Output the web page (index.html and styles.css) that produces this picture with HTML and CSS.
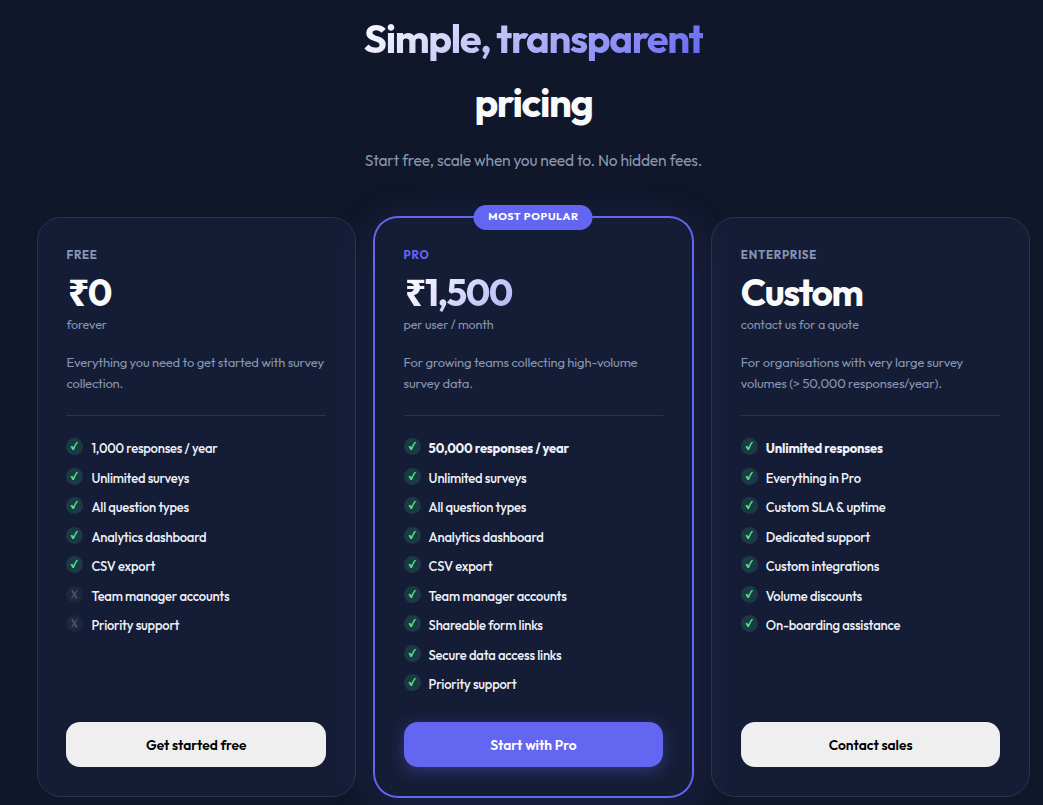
FILE: index.html
```html
<!DOCTYPE html>
<html lang="en">
<head>
  <meta charset="UTF-8">
  <title>Pricing</title>
  <meta name="viewport" content="width=device-width, initial-scale=1.0">
  <link rel="stylesheet" href="styles.css">
</head>
<body>
  <!-- icons shared by the feature lists -->
  <svg class="sprite" width="0" height="0">
    <symbol id="check" viewBox="0 0 17 17">
      <path d="M4.4 8.5 L6.2 7.7 L7.4 9.3 Q8.8 6 10.5 4 L12.2 3.9 Q9.6 7.4 8 11.9 L6.5 12 Z"/>
    </symbol>
    <symbol id="cross" viewBox="0 0 17 17">
      <path d="M4.9 4.3 L7.1 4.1 L8.7 6.9 L10.5 4.2 L12 4.2 L9.4 8.1 L11.8 12.3 L9.5 12.5 L8 9.7 L6.3 12.5 L4.8 12.5 L7.3 8.5 Z"/>
    </symbol>
  </svg>

  <section class="pricing">
    <h1><span class="grad">Simple, transparent</span><br>pricing</h1>
    <p class="sub">Start free, scale when you need to. No hidden fees.</p>

    <div class="plans">
      <div class="plan">
        <div class="plan-name">FREE</div>
        <div class="price"><span class="rupee">₹</span>0</div>
        <div class="period">forever</div>
        <p class="desc">Everything you need to get started with survey collection.</p>
        <ul>
          <li><svg class="yes"><use href="#check"/></svg>1,000 responses / year</li>
          <li><svg class="yes"><use href="#check"/></svg>Unlimited surveys</li>
          <li><svg class="yes"><use href="#check"/></svg>All question types</li>
          <li><svg class="yes"><use href="#check"/></svg>Analytics dashboard</li>
          <li><svg class="yes"><use href="#check"/></svg>CSV export</li>
          <li><svg class="no"><use href="#cross"/></svg>Team manager accounts</li>
          <li><svg class="no"><use href="#cross"/></svg>Priority support</li>
        </ul>
        <button>Get started free</button>
      </div>

      <div class="plan popular">
        <div class="badge">MOST POPULAR</div>
        <div class="plan-name">PRO</div>
        <div class="price grad"><span class="rupee">₹</span>1,500</div>
        <div class="period">per user / month</div>
        <p class="desc">For growing teams collecting high-volume survey data.</p>
        <ul>
          <li><svg class="yes"><use href="#check"/></svg><strong>50,000 responses / year</strong></li>
          <li><svg class="yes"><use href="#check"/></svg>Unlimited surveys</li>
          <li><svg class="yes"><use href="#check"/></svg>All question types</li>
          <li><svg class="yes"><use href="#check"/></svg>Analytics dashboard</li>
          <li><svg class="yes"><use href="#check"/></svg>CSV export</li>
          <li><svg class="yes"><use href="#check"/></svg>Team manager accounts</li>
          <li><svg class="yes"><use href="#check"/></svg>Shareable form links</li>
          <li><svg class="yes"><use href="#check"/></svg>Secure data access links</li>
          <li><svg class="yes"><use href="#check"/></svg>Priority support</li>
        </ul>
        <button class="primary">Start with Pro</button>
      </div>

      <div class="plan">
        <div class="plan-name">ENTERPRISE</div>
        <div class="price">Custom</div>
        <div class="period">contact us for a quote</div>
        <p class="desc">For organisations with very large survey volumes (&gt; 50,000 responses/year).</p>
        <ul>
          <li><svg class="yes"><use href="#check"/></svg><strong>Unlimited responses</strong></li>
          <li><svg class="yes"><use href="#check"/></svg>Everything in Pro</li>
          <li><svg class="yes"><use href="#check"/></svg>Custom SLA &amp; uptime</li>
          <li><svg class="yes"><use href="#check"/></svg>Dedicated support</li>
          <li><svg class="yes"><use href="#check"/></svg>Custom integrations</li>
          <li><svg class="yes"><use href="#check"/></svg>Volume discounts</li>
          <li><svg class="yes"><use href="#check"/></svg>On-boarding assistance</li>
        </ul>
        <button>Contact sales</button>
      </div>
    </div>
  </section>
</body>
</html>
```
FILE: styles.css
```css
* {
  box-sizing: border-box;
  margin: 0;
  padding: 0;
}

body {
  height: 805px;
  overflow: hidden;
  background: #10172a;
  color: #f8fafc;
  font-family: Outfit, Lato, "Noto Sans", sans-serif;
  letter-spacing: -0.16px;
}

.sprite {
  position: absolute;
}

.pricing {
  width: 993.7px;
  margin-left: 36.6px;
  padding-top: 7.3px;
}

h1 {
  text-align: center;
  font-size: 40px;
  font-weight: 700;
  line-height: 63.4px;
  letter-spacing: -1.4px;
}

.grad {
  background: linear-gradient(135deg, #fff 0%, #6366f1 100%);
  -webkit-background-clip: text;
  background-clip: text;
  color: transparent;
}

.sub {
  margin-top: 13px;
  text-align: center;
  font-size: 15.6px;
  line-height: 26px;
  letter-spacing: -0.2px;
  color: #8795b0;
}

.plans {
  display: grid;
  grid-template-columns: repeat(3, 1fr);
  gap: 18px;
  height: 580px;
  margin-top: 44px;
}

.plan {
  position: relative;
  display: flex;
  flex-direction: column;
  padding: 27px 28.8px 28.8px;
  background: #151d36;
  border: 1px solid #29334a;
  border-radius: 24px;
}

.popular {
  z-index: 1;
  border-color: #6366f1;
  box-shadow: 0 0 0 1px #6366f1, 0 8px 48px rgba(99, 102, 241, 0.17);
}

.badge {
  position: absolute;
  top: -13px;
  left: 50%;
  transform: translateX(-50%);
  width: 119px;
  height: 25px;
  text-align: center;
  font-size: 10.8px;
  font-weight: 700;
  line-height: 23.5px;
  letter-spacing: 0.6px;
  white-space: nowrap;
  color: #fff;
  background: #6366f1;
  border-radius: 13px;
}

.plan-name {
  font-size: 11.5px;
  font-weight: 700;
  line-height: 19px;
  letter-spacing: 0.75px;
  color: #8795b4;
}

.popular .plan-name {
  color: #6366f1;
}

.price {
  margin-top: 9px;
  font-size: 37px;
  font-weight: 700;
  line-height: 40px;
  letter-spacing: -1.5px;
}

.rupee {
  padding-left: 1.5px;
  font-family: "Open Sans", "Noto Sans", sans-serif;
  font-weight: 800;
  line-height: 1;
}

.period {
  margin-top: 1px;
  font-size: 12.5px;
  line-height: 20px;
  letter-spacing: -0.11px;
  color: #8795b0;
}

.desc {
  height: 64px;
  margin-top: 18px;
  font-size: 13px;
  line-height: 21px;
  color: #8795b0;
  border-bottom: 1px solid #29334a;
}

ul {
  flex: 1;
  list-style: none;
  padding-top: 22px;
}

li {
  display: flex;
  gap: 8px;
  height: 29.5px;
  font-size: 13px;
  font-weight: 500;
  line-height: 20px;
  letter-spacing: -0.2px;
  white-space: nowrap;
  color: #eef1f8;
}

strong {
  font-weight: 700;
}

li svg {
  width: 17px;
  height: 17px;
  margin-top: 0.3px;
  flex: none;
  border-radius: 50%;
}

.yes {
  background: #1b3a45;
  fill: #4ade80;
}

.no {
  background: #1e263e;
  fill: #475369;
}

button {
  height: 45px;
  border: 0;
  border-radius: 14px;
  background: #efefef;
  color: #000;
  font-family: inherit;
  font-size: 13.76px;
  font-weight: 600;
}

.primary {
  background: #6366f1;
  color: #fff;
  box-shadow: 0 4px 16px rgba(99, 102, 241, 0.35);
}
```
